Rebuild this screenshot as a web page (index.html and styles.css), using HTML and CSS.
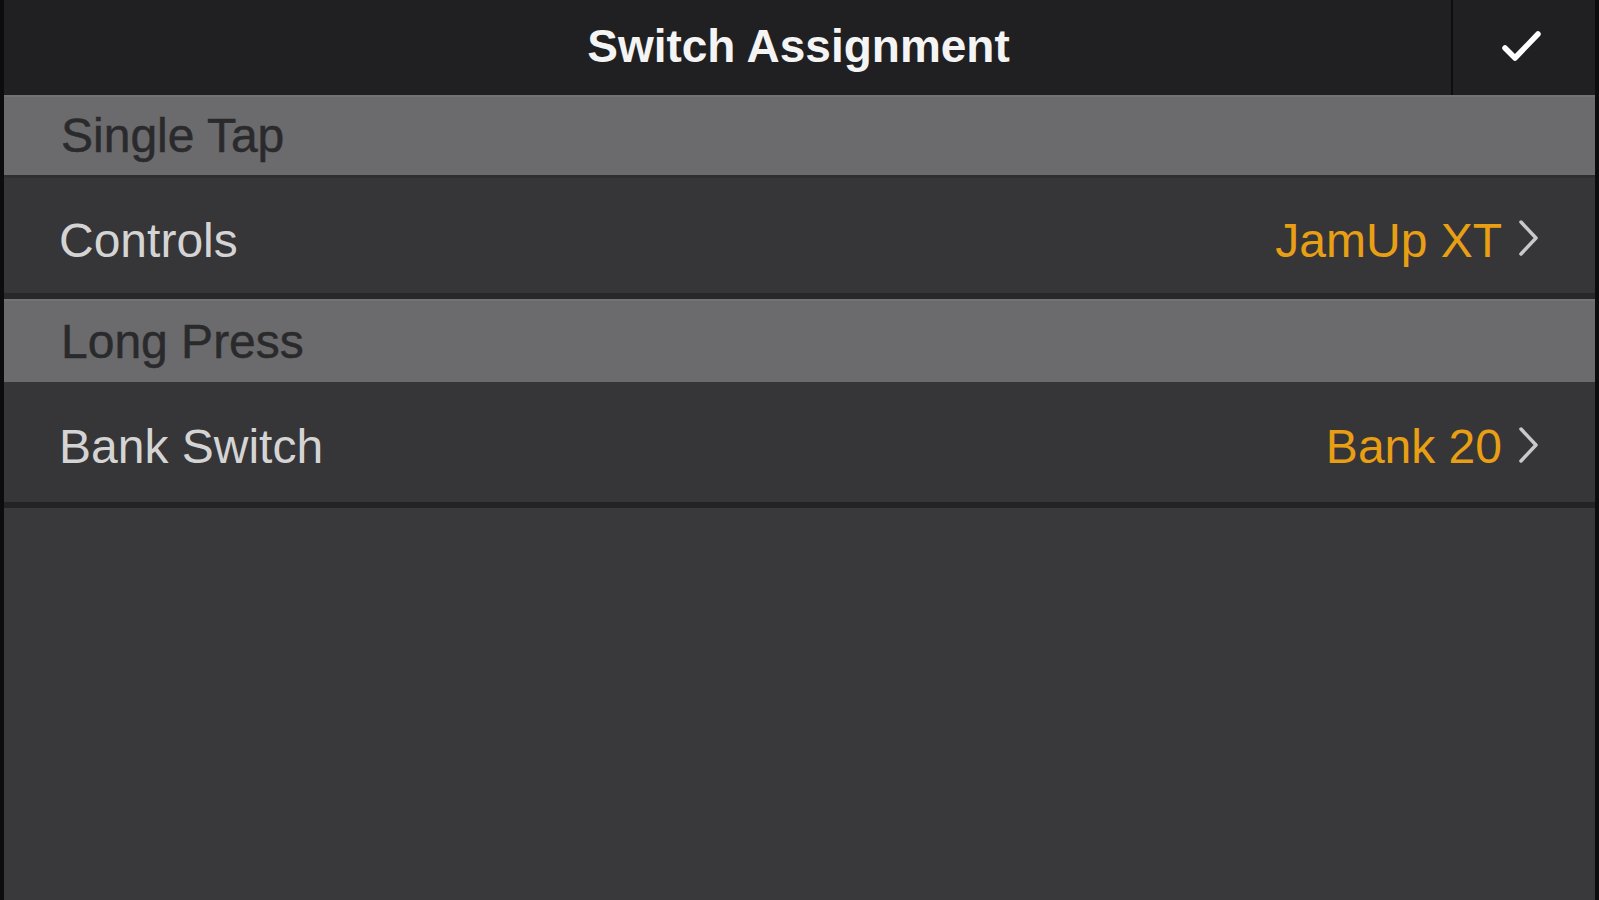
FILE: index.html
```html
<!DOCTYPE html>
<html lang="en">
<head>
<meta charset="utf-8">
<title>Switch Assignment</title>
<link rel="stylesheet" href="styles.css">
</head>
<body>
<div class="screen">
  <header class="navbar">
    <div class="nav-spacer"></div>
    <h1 class="nav-title">Switch Assignment</h1>
    <button class="nav-done" aria-label="Done">
      <svg width="44" height="38" viewBox="0 0 44 38">
        <path d="M5 20 L15 30 L38 6" fill="none" stroke="#ffffff" stroke-width="5.5" stroke-linecap="round" stroke-linejoin="round"/>
      </svg>
    </button>
  </header>
  <section class="group">
    <div class="section-head">Single Tap</div>
    <div class="row">
      <span class="row-label">Controls</span>
      <span class="row-value">JamUp XT</span>
      <svg class="chevron" width="22" height="38" viewBox="0 0 22 38"><path d="M3 3 L18 19 L3 35" fill="none" stroke="#c9c9c9" stroke-width="3.5" stroke-linecap="round" stroke-linejoin="round"/></svg>
    </div>
  </section>
  <section class="group">
    <div class="section-head">Long Press</div>
    <div class="row">
      <span class="row-label">Bank Switch</span>
      <span class="row-value">Bank 20</span>
      <svg class="chevron" width="22" height="38" viewBox="0 0 22 38"><path d="M3 3 L18 19 L3 35" fill="none" stroke="#c9c9c9" stroke-width="3.5" stroke-linecap="round" stroke-linejoin="round"/></svg>
    </div>
  </section>
</div>
</body>
</html>
```

FILE: styles.css
```css
html, body {
  margin: 0;
  padding: 0;
  height: 100%;
  background: #0c0c0e;
  overflow: hidden;
}

.screen {
  margin: 0 4px;
  height: 900px;
  background: #39393b;
  font-family: "Liberation Sans", Arial, sans-serif;
  display: flex;
  flex-direction: column;
}

.navbar {
  height: 95px;
  background: #202022;
  display: grid;
  grid-template-columns: 142px 1fr 144px;
  align-items: stretch;
}

.nav-title {
  margin: 0;
  align-self: center;
  text-align: center;
  color: #f4f4f4;
  font-size: 46px;
  font-weight: bold;
  line-height: 1;
  padding-bottom: 4px;
}

.nav-done {
  border: 0;
  border-left: 2px solid #0e0e10;
  background: transparent;
  padding: 0 4px 2px 0;
  margin: 0;
  display: flex;
  align-items: center;
  justify-content: center;
}

.section-head {
  background: #6b6b6d;
  border-top: 2px solid #737375;
  color: #2a2a2c;
  font-size: 48px;
  -webkit-text-stroke: 0.5px #2a2a2c;
  display: flex;
  align-items: center;
  padding-left: 57px;
  padding-bottom: 2px;
  box-sizing: border-box;
  height: 80px;
}

.group:nth-of-type(2) .section-head {
  height: 83px;
  padding-bottom: 0;
}

.row {
  background: #363638;
  border-top: 3px solid #2f2f31;
  border-bottom: 6px solid #28282a;
  height: 124px;
  box-sizing: border-box;
  display: flex;
  align-items: center;
  padding: 9px 55px 0 55px;
  font-size: 48px;
}

.group:nth-of-type(2) .row {
  border-top: 0;
  height: 126px;
  border-bottom-color: #232325;
}

.row-label {
  color: #d4d4d4;
  flex: 1;
}

.row-value {
  color: #e99f14;
}

.chevron {
  margin-left: 16px;
  margin-top: -4px;
}
```
